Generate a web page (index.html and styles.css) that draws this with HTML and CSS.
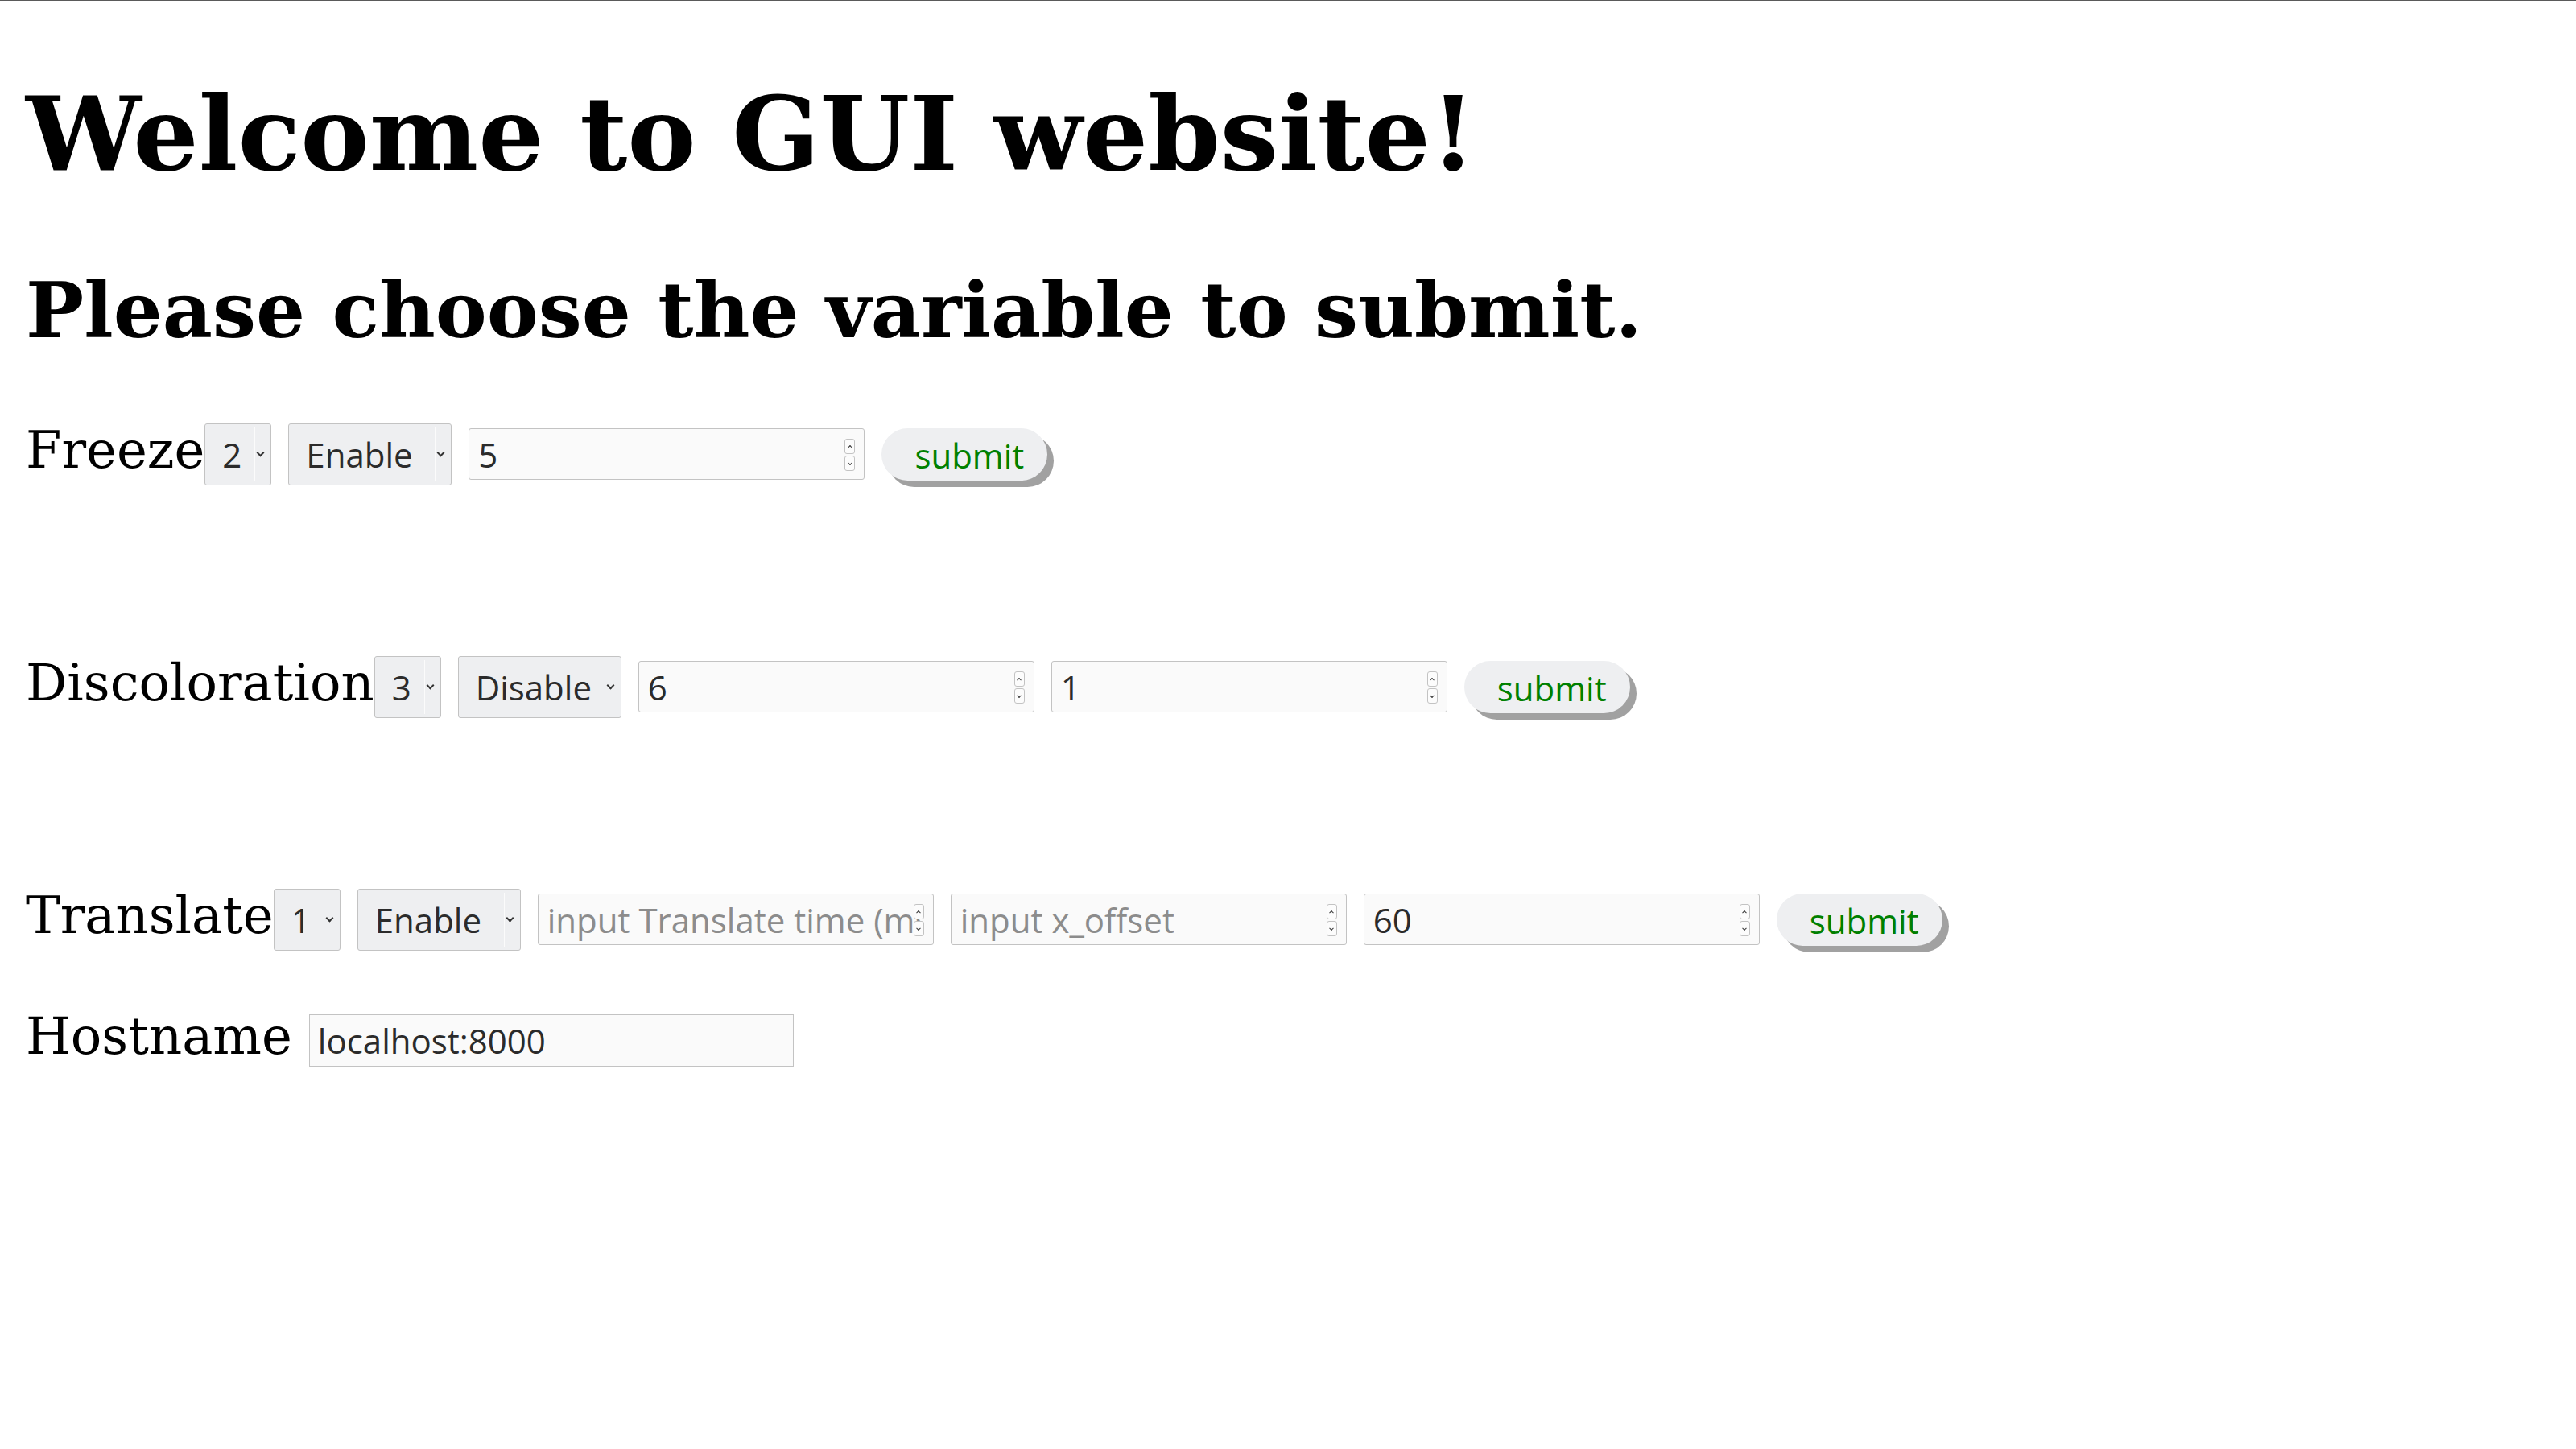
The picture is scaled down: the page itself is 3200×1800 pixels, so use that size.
FILE: index.html
```html
<!DOCTYPE html>
<html lang="en">
<head>
  <meta charset="UTF-8">
  <title>GUI website</title>
  <link rel="stylesheet" href="styles.css">
</head>
<body>
  <h1>Welcome to GUI website!</h1>
  <h2>Please choose the variable to submit.</h2>

  <form class="row">
    <label class="name">Freeze</label>
    <span class="pick pick-idx">
      <select>
        <option>1</option>
        <option selected>2</option>
        <option>3</option>
      </select>
    </span>
    <span class="pick pick-state">
      <select>
        <option selected>Enable</option>
        <option>Disable</option>
      </select>
    </span>
    <span class="num">
      <input type="number" value="5" placeholder="input Freeze time (ms)">
      <span class="spin"><i></i><i></i></span>
    </span>
    <button type="button" class="send">submit</button>
  </form>

  <form class="row">
    <label class="name">Discoloration</label>
    <span class="pick pick-idx">
      <select>
        <option>1</option>
        <option>2</option>
        <option selected>3</option>
      </select>
    </span>
    <span class="pick pick-state">
      <select>
        <option>Enable</option>
        <option selected>Disable</option>
      </select>
    </span>
    <span class="num">
      <input type="number" value="6" placeholder="input Discoloration time (ms)">
      <span class="spin"><i></i><i></i></span>
    </span>
    <span class="num">
      <input type="number" value="1" placeholder="input color">
      <span class="spin"><i></i><i></i></span>
    </span>
    <button type="button" class="send">submit</button>
  </form>

  <form class="row tight">
    <label class="name">Translate</label>
    <span class="pick pick-idx">
      <select>
        <option selected>1</option>
        <option>2</option>
        <option>3</option>
      </select>
    </span>
    <span class="pick pick-state">
      <select>
        <option selected>Enable</option>
        <option>Disable</option>
      </select>
    </span>
    <span class="num">
      <input type="number" placeholder="input Translate time (ms)">
      <span class="spin"><i></i><i></i></span>
    </span>
    <span class="num">
      <input type="number" placeholder="input x_offset">
      <span class="spin"><i></i><i></i></span>
    </span>
    <span class="num">
      <input type="number" value="60" placeholder="input y_offset">
      <span class="spin"><i></i><i></i></span>
    </span>
    <button type="button" class="send">submit</button>
  </form>

  <div class="row host">
    <label class="name">Hostname</label>
    <input type="text" class="hostname" value="localhost:8000">
  </div>
</body>
</html>
```

FILE: styles.css
```css
html {
  border-top: 1px solid #5a5a5a;
}
body {
  margin: 0;
  padding: 0 32px;
  font-family: "DejaVu Serif", serif;
  color: #000;
  background: #fff;
}
h1 {
  font-size: 128px;
  font-weight: bold;
  margin: 90px 0 88px;
}
h2 {
  font-size: 96px;
  font-weight: bold;
  margin: 0 0 80px;
}
.row {
  display: flex;
  align-items: center;
  margin: 0 0 205px;
}
.row.tight {
  margin-bottom: 66px;
}
.name {
  font-size: 64px;
  line-height: normal;
  padding-bottom: 10px;
}
.pick, .num, .send, .hostname {
  margin-left: 21px;
}
.name + .pick {
  margin-left: 0;
}
select, input, button {
  font-family: "Open Sans", "Noto Sans", sans-serif;
  font-size: 42px;
  color: #2b2b2b;
  box-sizing: border-box;
  outline: none;
}

/* dropdowns */
.pick {
  position: relative;
  display: block;
}
.pick select {
  appearance: none;
  -webkit-appearance: none;
  display: block;
  height: 77px;
  margin: 0;
  padding: 0 0 0 21px;
  background: #eeeff1;
  border: 1px solid #c3c3c3;
  border-radius: 3px;
}
.pick-idx select {
  width: 83px;
}
.pick-state select {
  width: 203px;
}
.pick::before {
  content: "";
  position: absolute;
  top: 5px;
  bottom: 5px;
  right: 20px;
  width: 1px;
  background: #fbfbfb;
  pointer-events: none;
}
.pick::after {
  content: "";
  position: absolute;
  top: 50%;
  right: 10px;
  width: 5px;
  height: 5px;
  margin-top: -5px;
  border-right: 2px solid #333;
  border-bottom: 2px solid #333;
  transform: rotate(45deg);
  pointer-events: none;
}

/* number fields */
.num {
  position: relative;
  display: block;
}
.num input {
  display: block;
  width: 492px;
  height: 64px;
  margin: 0;
  padding: 0 14px 0 11px;
  background: #fafafa;
  border: 1px solid #c3c3c3;
  border-radius: 3px;
  -moz-appearance: textfield;
}
.num input::-webkit-inner-spin-button,
.num input::-webkit-outer-spin-button {
  -webkit-appearance: none;
  margin: 0;
}
input::placeholder {
  color: #8c8c8c;
}
.spin {
  position: absolute;
  top: 13px;
  right: 12px;
  width: 13px;
  display: flex;
  flex-direction: column;
  gap: 2px;
}
.spin i {
  position: relative;
  display: block;
  height: 19px;
  box-sizing: border-box;
  background: #fcfcfc;
  border: 1px solid #c3c3c3;
  border-radius: 3px;
}
.spin i::after {
  content: "";
  position: absolute;
  left: 50%;
  top: 50%;
  width: 3px;
  height: 3px;
  border-left: 1px solid #333;
  border-top: 1px solid #333;
  transform: translate(-50%, -30%) rotate(45deg);
}
.spin i + i::after {
  transform: translate(-50%, -70%) rotate(225deg);
}

/* buttons */
.send {
  width: 206px;
  height: 65px;
  padding: 2px 0 0 12px;
  color: #008000;
  background: #eeeff1;
  border: none;
  border-radius: 33px;
  box-shadow: 8px 8px 0 #a1a1a1;
  cursor: pointer;
}

.hostname {
  width: 602px;
  height: 65px;
  padding: 0 10px;
  background: #fafafa;
  border: 1px solid #c3c3c3;
  border-radius: 0;
}
```
